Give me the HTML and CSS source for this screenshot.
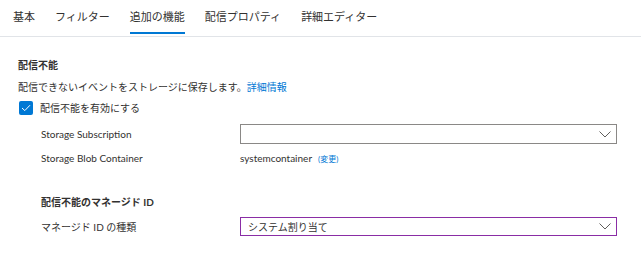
FILE: index.html
```html
<!DOCTYPE html>
<html lang="ja">
<head>
  <meta charset="UTF-8">
  <title>追加の機能</title>
  <link rel="stylesheet" href="styles.css">
</head>
<body>
  <nav class="tabs">
    <span class="tab">基本</span>
    <span class="tab">フィルター</span>
    <span class="tab active">追加の機能</span>
    <span class="tab">配信プロパティ</span>
    <span class="tab">詳細エディター</span>
  </nav>

  <section class="panel">
    <h3 class="title">配信不能</h3>
    <p class="desc">配信できないイベントをストレージに保存します。<a href="#">詳細情報</a></p>
    <label class="check">
      <span class="box">
        <svg width="10" height="8" viewBox="0 0 10 8"><polyline points="1,4 3.8,6.6 9,1.2" fill="none" stroke="#fff" stroke-width="1"/></svg>
      </span>
      配信不能を有効にする
    </label>

    <div class="form">
      <div class="row">
        <span class="label">Storage Subscription</span>
        <div class="select">
          <span class="value"></span>
          <svg class="chev" width="12" height="7" viewBox="0 0 12 7"><polyline points="0.5,0.5 6,6 11.5,0.5" fill="none" stroke="#605e5c" stroke-width="1"/></svg>
        </div>
      </div>
      <div class="row">
        <span class="label">Storage Blob Container</span>
        <span class="plain">systemcontainer<a class="small" href="#">(変更)</a></span>
      </div>

      <h3 class="title sub">配信不能のマネージド ID</h3>
      <div class="row">
        <span class="label">マネージド ID の種類</span>
        <div class="select focus">
          <span class="value">システム割り当て</span>
          <svg class="chev" width="12" height="7" viewBox="0 0 12 7"><polyline points="0.5,0.5 6,6 11.5,0.5" fill="none" stroke="#605e5c" stroke-width="1"/></svg>
        </div>
      </div>
    </div>
  </section>
</body>
</html>
```

FILE: styles.css
```css
body {
  margin: 0;
  background: #fff;
  color: #323130;
  font-family: "Segoe UI", Lato, "Noto Sans CJK JP", sans-serif;
  font-size: 10px;
}
a {
  color: #0078d4;
  text-decoration: none;
}
.tabs {
  display: flex;
  gap: 20px;
  height: 36px;
  padding-left: 13px;
  border-bottom: 1px solid #e1e4e8;
}
.tab {
  display: flex;
  align-items: center;
  font-size: 11px;
  color: #323130;
  border-bottom: 2px solid transparent;
  margin-bottom: 2px;
}
.tab.active {
  border-bottom-color: #0078d4;
}
.panel {
  padding: 20px 18px 0 18px;
}
.title {
  margin: 0;
  font-size: 10px;
  font-weight: bold;
  line-height: 16px;
}
.desc {
  margin: 6px 0 0 0;
  line-height: 16px;
}
.check {
  display: flex;
  align-items: center;
  gap: 7px;
  margin-top: 5px;
  line-height: 16px;
}
.box {
  width: 14px;
  height: 14px;
  margin-left: 1px;
  background: #0078d4;
  border-radius: 2px;
  display: flex;
  align-items: center;
  justify-content: center;
}
.form {
  padding-left: 23px;
  margin-top: 6px;
}
.row {
  display: flex;
  align-items: center;
  min-height: 24px;
}
.label {
  width: 199px;
}
.select {
  width: 377px;
  height: 20px;
  box-sizing: border-box;
  border: 1px solid #8a8886;
  display: flex;
  align-items: center;
  justify-content: space-between;
  padding: 0 5px 0 7px;
}
.select.focus {
  border: 1px solid #8a2da5;
  height: 19px;
}
.chev {
  margin-top: 1px;
}
.small {
  font-size: 8px;
  margin-left: 6px;
}
.sub {
  margin-top: 24px;
  margin-bottom: 4px;
}
```
